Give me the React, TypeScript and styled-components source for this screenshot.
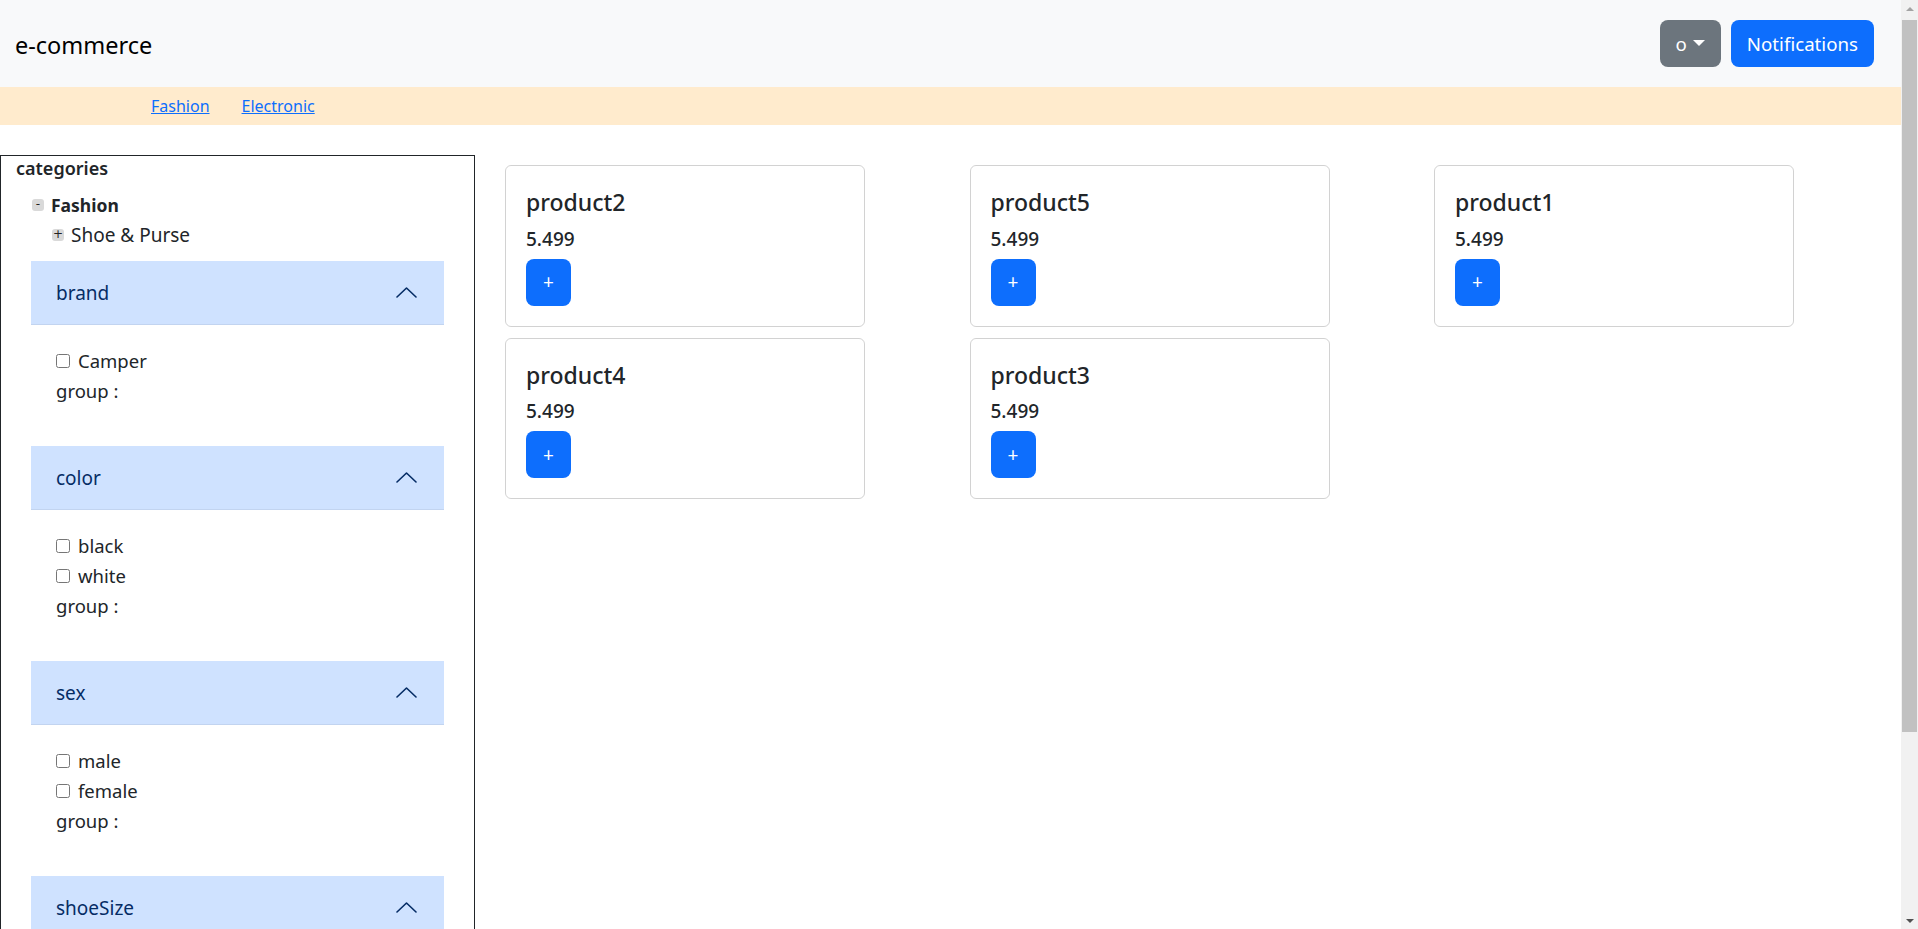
import React from 'react';
import styled, { createGlobalStyle } from 'styled-components';

const GlobalStyle = createGlobalStyle`
  html, body {
    margin: 0;
    padding: 0;
    overflow: hidden;
  }
  body {
    font-family: "Noto Sans", "Open Sans", sans-serif;
    color: #212529;
    background: #ffffff;
  }
  * {
    box-sizing: border-box;
  }
`;

const Page = styled.div`
  display: flex;
  height: 100vh;
  overflow: hidden;
`;

const Content = styled.div`
  flex: 1;
  min-width: 0;
`;

// window scrollbar as it shows in the screenshot
const ScrollRail = styled.div`
  width: 17px;
  flex-shrink: 0;
  background: #f1f1f1;
  display: flex;
  flex-direction: column;
  align-items: center;
`;

const ScrollArrow = styled.div<{ $down?: boolean }>`
  height: 17px;
  width: 100%;
  display: flex;
  align-items: center;
  justify-content: center;

  &::after {
    content: '';
    border-left: 4px solid transparent;
    border-right: 4px solid transparent;
    ${({ $down }) =>
      $down ? 'border-top: 4px solid #505050;' : 'border-bottom: 4px solid #a3a3a3;'}
  }
`;

const ScrollThumb = styled.div`
  width: 15px;
  height: 712px;
  margin-top: 3px;
  background: #c1c1c1;
`;

const ScrollSpacer = styled.div`
  flex: 1;
`;

const NavBar = styled.nav`
  height: 87px;
  background: #f8f9fa;
  display: flex;
  align-items: center;
  justify-content: space-between;
  padding: 0 27px 0 15px;
`;

const Brand = styled.span`
  font-size: 23.5px;
  color: #000;
  margin-top: 2px;
`;

const NavActions = styled.div`
  display: flex;
  gap: 10px;
`;

const LargeButton = styled.button<{ $variant: 'primary' | 'secondary' }>`
  height: 47px;
  border: none;
  border-radius: 8px;
  padding: 0 16px;
  font-family: inherit;
  font-size: 18.7px;
  line-height: 30px;
  color: #fff;
  background: ${({ $variant }) => ($variant === 'primary' ? '#0d6efd' : '#6c757d')};
  display: inline-flex;
  align-items: center;
  cursor: pointer;
`;

const Caret = styled.span`
  display: inline-block;
  margin-left: 6px;
  margin-top: -2px;
  border-top: 6px solid #fff;
  border-left: 6px solid transparent;
  border-right: 6px solid transparent;
`;

const CategoryBar = styled.div`
  height: 38px;
  background: #ffebcd;
  display: flex;
  align-items: center;
  gap: 32px;
  padding-left: 151px;
`;

const CategoryLink = styled.a`
  font-size: 16px;
  color: #0d6efd;
  text-decoration: underline;
`;

const Layout = styled.div`
  display: flex;
  align-items: flex-start;
  margin-top: 30px;
`;

const Sidebar = styled.aside`
  width: 475px;
  flex-shrink: 0;
  border: 1px solid #212529;
`;

const SidebarTitle = styled.div`
  padding-left: 15px;
  font-size: 18px;
  font-weight: 600;
  line-height: 25.5px;
`;

const TreeNode = styled.div<{ $depth: number }>`
  display: flex;
  align-items: center;
  gap: 7px;
  height: 30px;
  padding-left: ${({ $depth }) => 31 + $depth * 20}px;
`;

const TreeToggle = styled.span`
  width: 12px;
  height: 12px;
  border-radius: 3px;
  background: #d9d9d9;
  color: #222;
  font-size: 12px;
  line-height: 11px;
  text-align: center;
  font-family: "DejaVu Sans", sans-serif;
`;

const TreeLabel = styled.span<{ $bold?: boolean }>`
  font-size: ${({ $bold }) => ($bold ? '17.5px' : '19px')};
  font-weight: ${({ $bold }) => ($bold ? 700 : 400)};
`;

const Tree = styled.div`
  margin-top: 8px;
`;

const Accordion = styled.div`
  margin: 11px 30px 0;
`;

const FilterHeader = styled.div`
  height: 64px;
  background: #cfe2ff;
  color: #052c65;
  display: flex;
  align-items: center;
  justify-content: space-between;
  padding: 0 27px 0 25px;
  font-size: 19px;
  line-height: 30px;
  box-shadow: inset 0 -1px 0 rgba(0, 0, 0, 0.06);
`;

const FilterBody = styled.div`
  padding: 21px 25px 40px;
  font-size: 18.5px;
  line-height: 30px;
`;

const OptionRow = styled.label`
  display: flex;
  align-items: center;
  height: 30px;
`;

const Checkbox = styled.input`
  width: 14px;
  height: 14px;
  margin: 0 8px 0 0;
`;

const Main = styled.main`
  flex: 1;
  padding: 10px 0 0 30px;
  display: grid;
  grid-template-columns: repeat(3, 360px);
  column-gap: 104.5px;
  row-gap: 11px;
  align-content: start;
`;

const ProductCard = styled.div`
  border: 1px solid rgba(0, 0, 0, 0.175);
  border-radius: 6px;
  padding: 23px 20px 20px;
`;

const ProductTitle = styled.h4`
  margin: 0 0 10px;
  font-size: 23px;
  font-weight: 500;
  line-height: 1.2;
`;

const ProductPrice = styled.h5`
  margin: 0 0 8px;
  font-size: 19px;
  font-weight: 500;
  line-height: 24px;
`;

const AddButton = styled.button`
  width: 45px;
  height: 47px;
  border: none;
  border-radius: 8px;
  background: #0d6efd;
  color: #fff;
  font-family: inherit;
  font-size: 19px;
  padding: 0;
  cursor: pointer;
`;

const Chevron = () => (
  <svg width="21" height="11" viewBox="0 0 21 11" fill="none">
    <polyline
      points="1,10 10.5,1 20,10"
      stroke="#052c65"
      strokeWidth="1.6"
      strokeLinecap="round"
      strokeLinejoin="round"
    />
  </svg>
);

const filters = [
  { name: 'brand', options: ['Camper'] },
  { name: 'color', options: ['black', 'white'] },
  { name: 'sex', options: ['male', 'female'] },
  { name: 'shoeSize', options: ['38', '39', '40', '41'] },
];

const products = ['product2', 'product5', 'product1', 'product4', 'product3'];

export default function App() {
  return (
    <Page>
      <GlobalStyle />
      <Content>
        <NavBar>
          <Brand>e-commerce</Brand>
          <NavActions>
            <LargeButton $variant="secondary">
              o<Caret />
            </LargeButton>
            <LargeButton $variant="primary">Notifications</LargeButton>
          </NavActions>
        </NavBar>
        <CategoryBar>
          <CategoryLink href="#">Fashion</CategoryLink>
          <CategoryLink href="#">Electronic</CategoryLink>
        </CategoryBar>
        <Layout>
          <Sidebar>
            <SidebarTitle>categories</SidebarTitle>
            <Tree>
              <TreeNode $depth={0}>
                <TreeToggle>-</TreeToggle>
                <TreeLabel $bold>Fashion</TreeLabel>
              </TreeNode>
              <TreeNode $depth={1}>
                <TreeToggle>+</TreeToggle>
                <TreeLabel>Shoe &amp; Purse</TreeLabel>
              </TreeNode>
            </Tree>
            <Accordion>
              {filters.map((f) => (
                <div key={f.name}>
                  <FilterHeader>
                    <span>{f.name}</span>
                    <Chevron />
                  </FilterHeader>
                  <FilterBody>
                    {f.options.map((o) => (
                      <OptionRow key={o}>
                        <Checkbox type="checkbox" />
                        {o}
                      </OptionRow>
                    ))}
                    <div>group :</div>
                  </FilterBody>
                </div>
              ))}
            </Accordion>
          </Sidebar>
          <Main>
            {products.map((p) => (
              <ProductCard key={p}>
                <ProductTitle>{p}</ProductTitle>
                <ProductPrice>5.499</ProductPrice>
                <AddButton>+</AddButton>
              </ProductCard>
            ))}
          </Main>
        </Layout>
      </Content>
      <ScrollRail>
        <ScrollArrow />
        <ScrollThumb />
        <ScrollSpacer />
        <ScrollArrow $down />
      </ScrollRail>
    </Page>
  );
}
